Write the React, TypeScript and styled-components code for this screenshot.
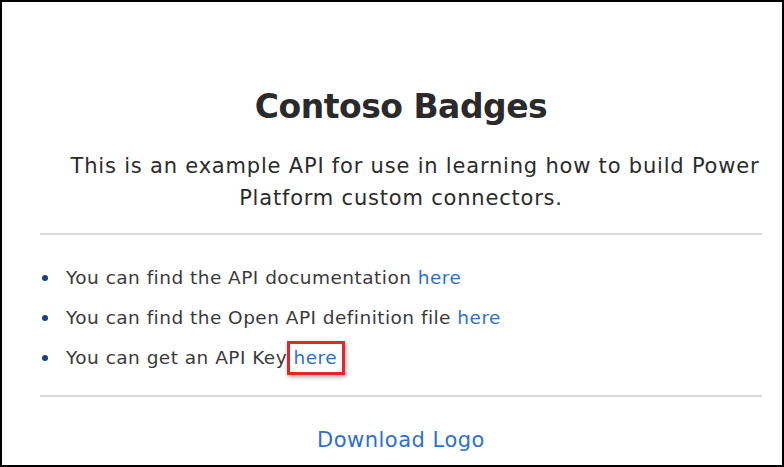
import { createGlobalStyle, styled } from 'styled-components';

const GlobalStyle = createGlobalStyle`
    html, body {
        margin: 0;
        padding: 0;
        background: #ffffff;
    }
    * {
        box-sizing: border-box;
    }
`;

const Frame = styled.div`
    width: 784px;
    height: 467px;
    border: 2px solid #000000;
    background: #ffffff;
    overflow: hidden;
    font-family: 'DejaVu Sans', 'Noto Sans', sans-serif;
    color: #2e2e2e;
    display: flex;
    flex-direction: column;
    padding: 0 20px 0 38px;
`;

const Header = styled.header`
    display: flex;
    flex-direction: column;
    align-items: center;
    padding-top: 82px;
`;

const Title = styled.h1`
    margin: 0;
    font-size: 33px;
    line-height: 46px;
    font-weight: 700;
    color: #2a2a2a;
    letter-spacing: -0.5px;
`;

const Lead = styled.p`
    margin: 20px 0 0;
    font-size: 21px;
    line-height: 32px;
    letter-spacing: 0.8px;
    text-align: center;
    color: #2b2b2b;
`;

// the first line sits a little right of centre in the original
const LeadFirstLine = styled.span`
    padding-left: 28px;
`;

const Rule = styled.hr`
    width: 100%;
    margin: 0;
    border: none;
    border-top: 2px solid #d9d9d9;
`;

const TopRule = styled(Rule)`
    margin-top: 19px;
`;

const LinkList = styled.ul`
    list-style: none;
    margin: 0;
    padding: 29px 0 23px;
    display: flex;
    flex-direction: column;
    gap: 12px;
`;

const Item = styled.li`
    font-size: 18.5px;
    line-height: 28px;
    letter-spacing: 0.47px;
    color: #3a3a3a;
    white-space: nowrap;

    &::before {
        content: '';
        display: inline-block;
        vertical-align: middle;
        width: 6px;
        height: 6px;
        border-radius: 50%;
        background: #1d3f8a;
        margin: -3px 18px 0 2px;
    }
`;

const Anchor = styled.a`
    position: relative;
    color: #2f6fd0;
    text-decoration: none;
`;

const Highlight = styled.span`
    position: absolute;
    left: -6px;
    right: -8px;
    top: -6px;
    bottom: -7px;
    border: 3px solid #e3262c;
    box-shadow: 1px 2px 4px rgba(0, 0, 0, 0.35);
    pointer-events: none;
`;

const Footer = styled.div`
    display: flex;
    justify-content: center;
    padding-top: 29px;
`;

const DownloadLink = styled.a`
    font-size: 21px;
    line-height: 28px;
    letter-spacing: 0.5px;
    color: #2f6fd0;
    text-decoration: none;
`;

const items = [
    { text: 'You can find the API documentation', marked: false },
    { text: 'You can find the Open API definition file', marked: false },
    { text: 'You can get an API Key', marked: true },
];

export default function App() {
    return (
        <>
            <GlobalStyle />
            <Frame>
                <Header>
                    <Title>Contoso Badges</Title>
                    <Lead>
                        <LeadFirstLine>This is an example API for use in learning how to build Power</LeadFirstLine>
                        <br />
                        Platform custom connectors.
                    </Lead>
                </Header>
                <TopRule />
                <LinkList>
                    {items.map((item) => (
                        <Item key={item.text}>
                            {item.text}{' '}
                            <Anchor href="#">
                                here
                                {item.marked && <Highlight />}
                            </Anchor>
                        </Item>
                    ))}
                </LinkList>
                <Rule />
                <Footer>
                    <DownloadLink href="#">Download Logo</DownloadLink>
                </Footer>
            </Frame>
        </>
    );
}
